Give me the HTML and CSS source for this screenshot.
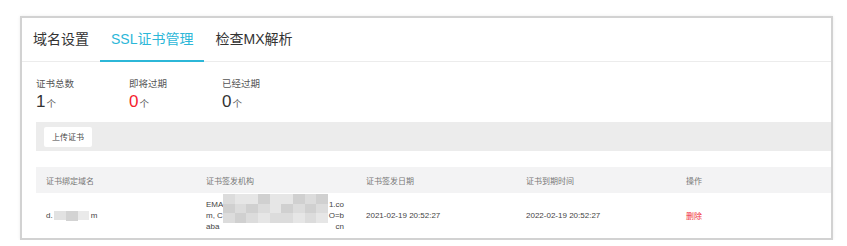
FILE: index.html
```html
<!DOCTYPE html>
<html lang="zh-CN">
<head>
    <meta charset="UTF-8">
    <title>SSL证书管理</title>
    <link rel="stylesheet" href="styles.css">
</head>
<body>

<div class="panel">
    <!-- 标签页 -->
    <div class="tabs">
        <div class="tab">域名设置</div>
        <div class="tab active">SSL证书管理</div>
        <div class="tab">检查MX解析</div>
    </div>

    <div class="content">
        <!-- 证书统计 -->
        <div class="stats">
            <div class="stat">
                <div class="stat-label">证书总数</div>
                <div class="stat-num">1<span class="unit">个</span></div>
            </div>
            <div class="stat">
                <div class="stat-label">即将过期</div>
                <div class="stat-num warn">0<span class="unit">个</span></div>
            </div>
            <div class="stat">
                <div class="stat-label">已经过期</div>
                <div class="stat-num">0<span class="unit">个</span></div>
            </div>
        </div>

        <div class="toolbar">
            <button type="button">上传证书</button>
        </div>

        <table>
            <thead>
                <tr>
                    <th>证书绑定域名</th>
                    <th>证书签发机构</th>
                    <th>证书签发日期</th>
                    <th>证书到期时间</th>
                    <th>操作</th>
                </tr>
            </thead>
            <tbody>
                <tr>
                    <td>
                        <span class="domain">d.<span class="blur-inline"><i class="m1"></i><i class="m2"></i><i class="m3"></i></span>m</span>
                    </td>
                    <td>
                        <div class="issuer">
                            <div class="line"><span>EMA</span><span>1.co</span></div>
                            <div class="line"><span>m, C</span><span>O=b</span></div>
                            <div class="line"><span>aba</span><span>cn</span></div>
                            <div class="mosaic">
                                <i class="c2"></i><i class="c1"></i><i class="c1"></i><i class="c3"></i><i class="c1"></i><i class="c1"></i><i class="c3"></i><i class="c2"></i><i class="c3"></i>
                                <i class="c3"></i><i class="c2"></i><i class="c3"></i><i class="c2"></i><i class="c1"></i><i class="c3"></i><i class="c2"></i><i class="c3"></i><i class="c2"></i>
                                <i class="c2"></i><i class="c3"></i><i class="c2"></i><i class="c1"></i><i class="c2"></i><i class="c2"></i><i class="c1"></i><i class="c2"></i><i class="c1"></i>
                            </div>
                        </div>
                    </td>
                    <td>2021-02-19 20:52:27</td>
                    <td>2022-02-19 20:52:27</td>
                    <td><a class="del">删除</a></td>
                </tr>
            </tbody>
        </table>
    </div>
</div>

</body>
</html>
```

FILE: styles.css
```css
body {
    margin: 0;
    font-family: "Liberation Sans", "Noto Sans CJK SC", sans-serif;
    background: #fff;
    color: #333;
}
.panel {
    margin: 16px 0 0 20px;
    width: 809px;
    height: 220px;
    border: 2px solid #d2d2d2;
    box-shadow: 0 0 3px rgba(0, 0, 0, 0.08);
    overflow: hidden;
}
.tabs {
    display: flex;
    height: 43px;
    border-bottom: 1px solid #ececec;
}
.tab {
    padding: 0 11px;
    height: 42px;
    line-height: 42px;
    font-size: 14px;
    color: #333;
    border-bottom: 2px solid transparent;
}
.tab.active {
    color: #2cb7d8;
    border-bottom-color: #2cb7d8;
}
.content {
    padding-left: 14px;
}
.stats {
    display: flex;
    margin-top: 16px;
}
.stat {
    width: 93px;
}
.stat-label {
    font-size: 9.5px;
    line-height: 12px;
    color: #555;
}
.stat-num {
    font-size: 17px;
    line-height: 20px;
    margin-top: 2px;
    color: #333;
}
.stat-num.warn {
    color: #f5222d;
}
.unit {
    font-size: 9.5px;
    color: #555;
    margin-left: 1px;
}
.toolbar {
    display: flex;
    align-items: center;
    height: 29px;
    margin-top: 8px;
    padding-left: 8px;
    background-color: #ececec;
}
button {
    width: 48px;
    height: 20px;
    padding: 0;
    font-family: inherit;
    font-size: 8px;
    color: #444;
    background-color: #fff;
    border: none;
    border-radius: 2px;
}
table {
    width: 800px;
    margin-top: 16px;
    border-collapse: collapse;
    table-layout: fixed;
}
th, td {
    width: 160px;
    padding: 0 10px;
    text-align: left;
    font-size: 8px;
    box-sizing: border-box;
}
th {
    height: 26px;
    font-weight: normal;
    color: #777;
    background-color: #f3f3f4;
}
td {
    height: 45px;
    color: #444;
}
.domain {
    display: inline-flex;
    align-items: center;
}
.blur-inline {
    display: inline-flex;
    margin: 0 2px 0 1px;
}
.blur-inline i {
    display: block;
    height: 9px;
}
.m1 { width: 12px; background: #e2e2e2; }
.m2 { width: 12px; background: #d3d3d3; height: 10px !important; }
.m3 { width: 11px; background: #eaeaea; }
.issuer {
    position: relative;
    line-height: 11px;
}
.line {
    display: flex;
    justify-content: space-between;
    width: 138px;
}
.mosaic {
    position: absolute;
    left: 17px;
    top: -5px;
    width: 105px;
    height: 29px;
    display: grid;
    grid-template-columns: repeat(9, 1fr);
    grid-template-rows: repeat(3, 1fr);
}
.mosaic i {
    display: block;
}
.c1 { background: #e6e6e6; }
.c2 { background: #dcdcdc; }
.c3 { background: #d0d0d0; }
.del {
    color: #f0303a;
    cursor: pointer;
}
```
